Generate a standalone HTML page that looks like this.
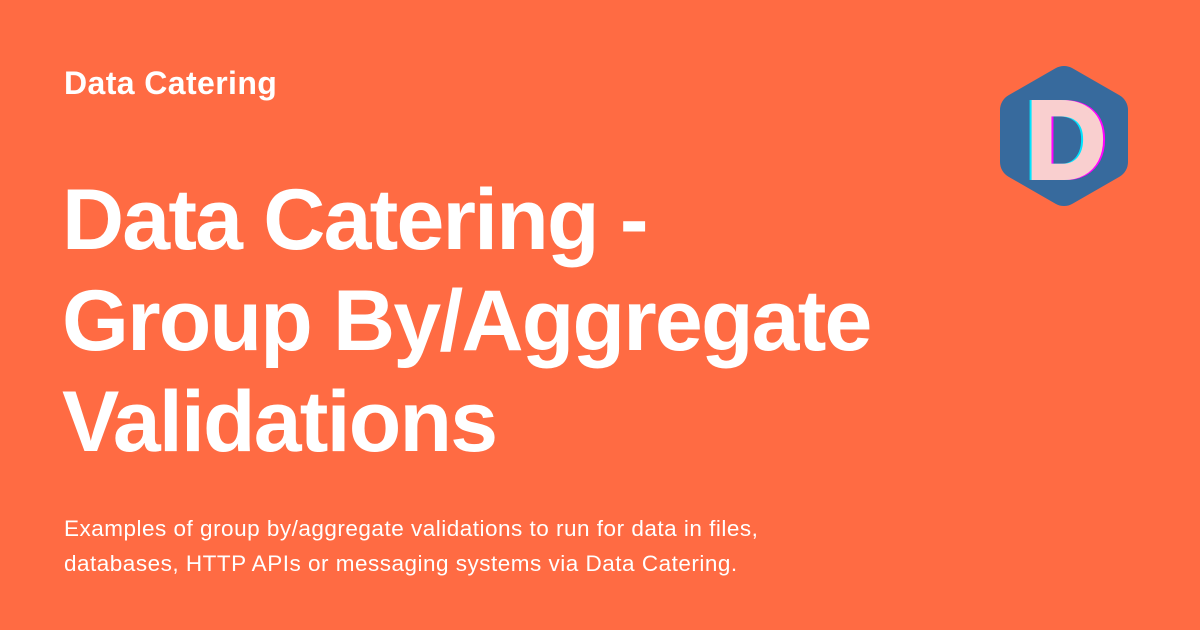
<!DOCTYPE html>
<html><head><style>
body{margin:0;width:1200px;height:630px;background:#ff6b43;font-family:"Liberation Sans",sans-serif;color:#fff;position:relative;overflow:hidden}
.site{position:absolute;left:64px;top:65px;font-size:32px;font-weight:bold;letter-spacing:0.4px}
.title{position:absolute;left:62px;top:170px;font-size:86px;font-weight:bold;line-height:101px;letter-spacing:-1.8px}
.desc{position:absolute;left:64px;top:511px;font-size:22.5px;line-height:35px;letter-spacing:0.5px}
svg{position:absolute;left:990px;top:55px}
</style></head><body>
<div class="site">Data Catering</div>
<div class="title">Data Catering -<br>Group By/Aggregate<br>Validations</div>
<div class="desc">Examples of group by/aggregate validations to run for data in files,<br>databases, HTTP APIs or messaging systems via Data Catering.</div>
<svg width="150" height="162" viewBox="990 55 150 162">
<path d="M1064 83 L1111 110 L1111 162 L1064 189 L1017 162 L1017 110 Z" fill="#376a9d" stroke="#376a9d" stroke-width="34" stroke-linejoin="round"/>
<text x="1068" y="178" text-anchor="middle" font-family="Liberation Sans" font-weight="bold" font-size="110" fill="#ff00ff" stroke="#ff00ff" stroke-width="4">D</text>
<text x="1064" y="178" text-anchor="middle" font-family="Liberation Sans" font-weight="bold" font-size="110" fill="#00e5ff" stroke="#00e5ff" stroke-width="4">D</text>
<text x="1066" y="178" text-anchor="middle" font-family="Liberation Sans" font-weight="bold" font-size="110" fill="#f9cfcf" stroke="#f9cfcf" stroke-width="4">D</text>
</svg>
</body></html>
